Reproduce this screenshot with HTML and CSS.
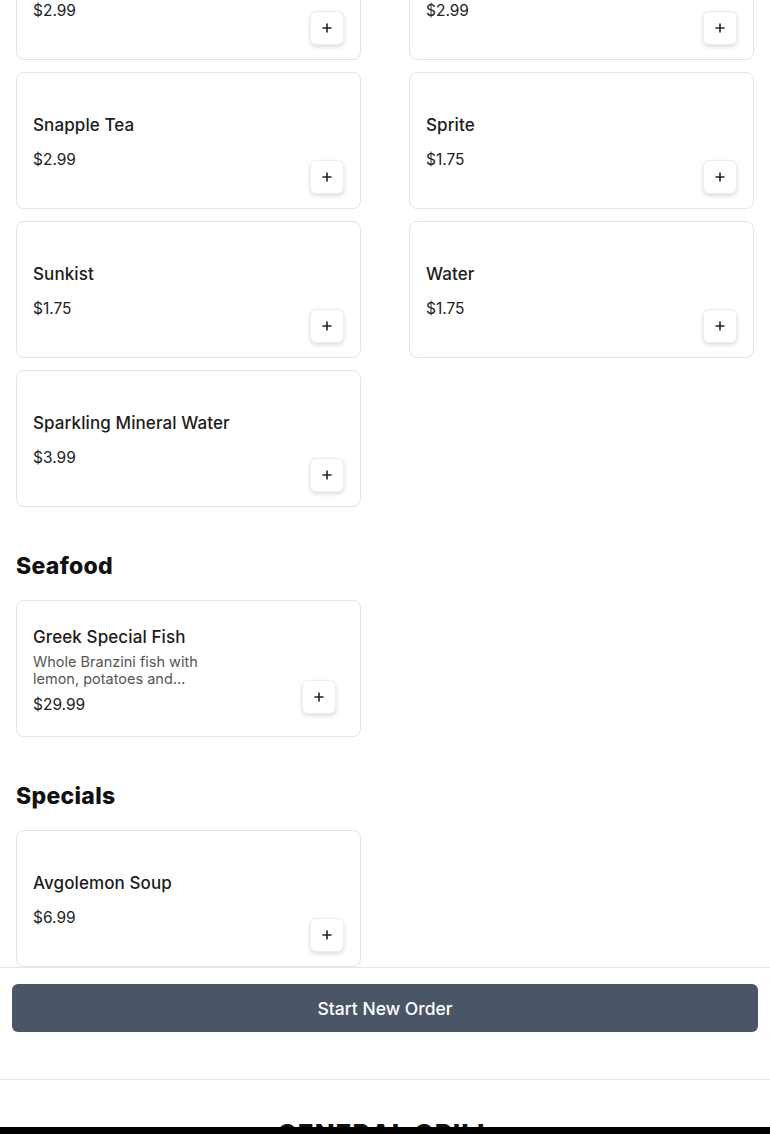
FILE: index.html
```html
<!DOCTYPE html>
<html lang="en">
<head>
<meta charset="utf-8">
<title>Menu</title>
<link rel="stylesheet" href="styles.css">
</head>
<body>
<main class="menu">
  <section class="category category--first">
    <div class="grid">
      <div class="card">
        <div class="info"><div class="name">Snapple Lemon Tea</div><div class="price">$2.99</div></div>
        <button class="add" aria-label="Add"><svg viewBox="0 0 12 12" width="12" height="12"><path d="M6 1.5v9M1.5 6h9" stroke="#222" stroke-width="1.6" fill="none"/></svg></button>
      </div>
      <div class="card">
        <div class="info"><div class="name">Snapple Peach Tea</div><div class="price">$2.99</div></div>
        <button class="add" aria-label="Add"><svg viewBox="0 0 12 12" width="12" height="12"><path d="M6 1.5v9M1.5 6h9" stroke="#222" stroke-width="1.6" fill="none"/></svg></button>
      </div>
      <div class="card">
        <div class="info"><div class="name">Snapple Tea</div><div class="price">$2.99</div></div>
        <button class="add" aria-label="Add"><svg viewBox="0 0 12 12" width="12" height="12"><path d="M6 1.5v9M1.5 6h9" stroke="#222" stroke-width="1.6" fill="none"/></svg></button>
      </div>
      <div class="card">
        <div class="info"><div class="name">Sprite</div><div class="price">$1.75</div></div>
        <button class="add" aria-label="Add"><svg viewBox="0 0 12 12" width="12" height="12"><path d="M6 1.5v9M1.5 6h9" stroke="#222" stroke-width="1.6" fill="none"/></svg></button>
      </div>
      <div class="card">
        <div class="info"><div class="name">Sunkist</div><div class="price">$1.75</div></div>
        <button class="add" aria-label="Add"><svg viewBox="0 0 12 12" width="12" height="12"><path d="M6 1.5v9M1.5 6h9" stroke="#222" stroke-width="1.6" fill="none"/></svg></button>
      </div>
      <div class="card">
        <div class="info"><div class="name">Water</div><div class="price">$1.75</div></div>
        <button class="add" aria-label="Add"><svg viewBox="0 0 12 12" width="12" height="12"><path d="M6 1.5v9M1.5 6h9" stroke="#222" stroke-width="1.6" fill="none"/></svg></button>
      </div>
      <div class="card">
        <div class="info"><div class="name">Sparkling Mineral Water</div><div class="price">$3.99</div></div>
        <button class="add" aria-label="Add"><svg viewBox="0 0 12 12" width="12" height="12"><path d="M6 1.5v9M1.5 6h9" stroke="#222" stroke-width="1.6" fill="none"/></svg></button>
      </div>
    </div>
  </section>

  <section class="category">
    <h2 class="cat-title">Seafood</h2>
    <div class="grid">
      <div class="card card--desc">
        <div class="info">
          <div class="name">Greek Special Fish</div>
          <div class="desc">Whole Branzini fish with lemon, potatoes and...</div>
          <div class="price">$29.99</div>
        </div>
        <button class="add" aria-label="Add"><svg viewBox="0 0 12 12" width="12" height="12"><path d="M6 1.5v9M1.5 6h9" stroke="#222" stroke-width="1.6" fill="none"/></svg></button>
      </div>
    </div>
  </section>

  <section class="category">
    <h2 class="cat-title">Specials</h2>
    <div class="grid">
      <div class="card">
        <div class="info"><div class="name">Avgolemon Soup</div><div class="price">$6.99</div></div>
        <button class="add" aria-label="Add"><svg viewBox="0 0 12 12" width="12" height="12"><path d="M6 1.5v9M1.5 6h9" stroke="#222" stroke-width="1.6" fill="none"/></svg></button>
      </div>
    </div>
  </section>
</main>

<div class="order-bar">
  <button class="start">Start New Order</button>
</div>

<footer class="footer">
  <div class="brand-clip"><div class="brand">GENERAL GRILL</div></div>
  <div class="footer-dark"></div>
</footer>
</body>
</html>
```

FILE: styles.css
```css
* { box-sizing: border-box; }
html, body { margin: 0; padding: 0; background: #fff; }
body {
  font-family: Inter, "Noto Sans", "Liberation Sans", sans-serif;
  color: #1c1c1c;
  overflow: hidden;
}
.menu { padding: 0 16px; }
.category--first { margin-top: -77px; }
.cat-title {
  margin: 45px 0 20px;
  font-size: 23px;
  line-height: 28px;
  font-weight: 800;
  color: #111;
  letter-spacing: 0.3px;
}
.grid {
  display: grid;
  grid-template-columns: 345px 345px;
  column-gap: 48px;
  row-gap: 12px;
}
.card {
  height: 137px;
  border: 1px solid #e4e4e4;
  border-radius: 8px;
  padding: 17px 16px 14px;
  display: flex;
  justify-content: space-between;
  align-items: center;
  background: #fff;
}
.info { display: flex; flex-direction: column; }
.name {
  font-size: 17px;
  line-height: 22px;
  font-weight: 500;
  color: #1c1c1c;
  letter-spacing: 0.1px;
}
.price {
  margin-top: 14px;
  font-size: 15.5px;
  line-height: 20px;
  color: #222;
}
.desc {
  margin-top: 5px;
  width: 190px;
  font-size: 14.5px;
  line-height: 17px;
  color: #555;
  font-weight: 400;
}
.card--desc { padding: 19px 16px 16px; }
.card--desc .price { margin-top: 8px; }
.add {
  align-self: flex-end;
  width: 34px;
  height: 34px;
  padding: 0;
  border: 1px solid #ededed;
  border-radius: 6px;
  background: #fff;
  box-shadow: 0 2px 4px rgba(0, 0, 0, 0.14);
  display: flex;
  align-items: center;
  justify-content: center;
  flex-shrink: 0;
}
.card--desc .add { margin: 0 8px 6px 0; }
.order-bar {
  border-top: 1px solid #e6e6e6;
  border-bottom: 1px solid #e6e6e6;
  padding: 16px 12px 47px;
  background: #fff;
}
.start {
  display: block;
  width: 100%;
  height: 48px;
  border: 0;
  border-radius: 6px;
  background: #4a5568;
  color: #fff;
  font-family: Inter, "Noto Sans", "Liberation Sans", sans-serif;
  font-size: 17.5px;
  font-weight: 500;
}
.footer { padding-top: 40px; }
.brand-clip { height: 7px; overflow: hidden; }
.brand {
  text-align: center;
  font-size: 26px;
  line-height: 26px;
  font-weight: 800;
  color: #111;
  letter-spacing: 1px;
  padding-top: 1px;
}
.footer-dark { height: 60px; background: #000; }
```
